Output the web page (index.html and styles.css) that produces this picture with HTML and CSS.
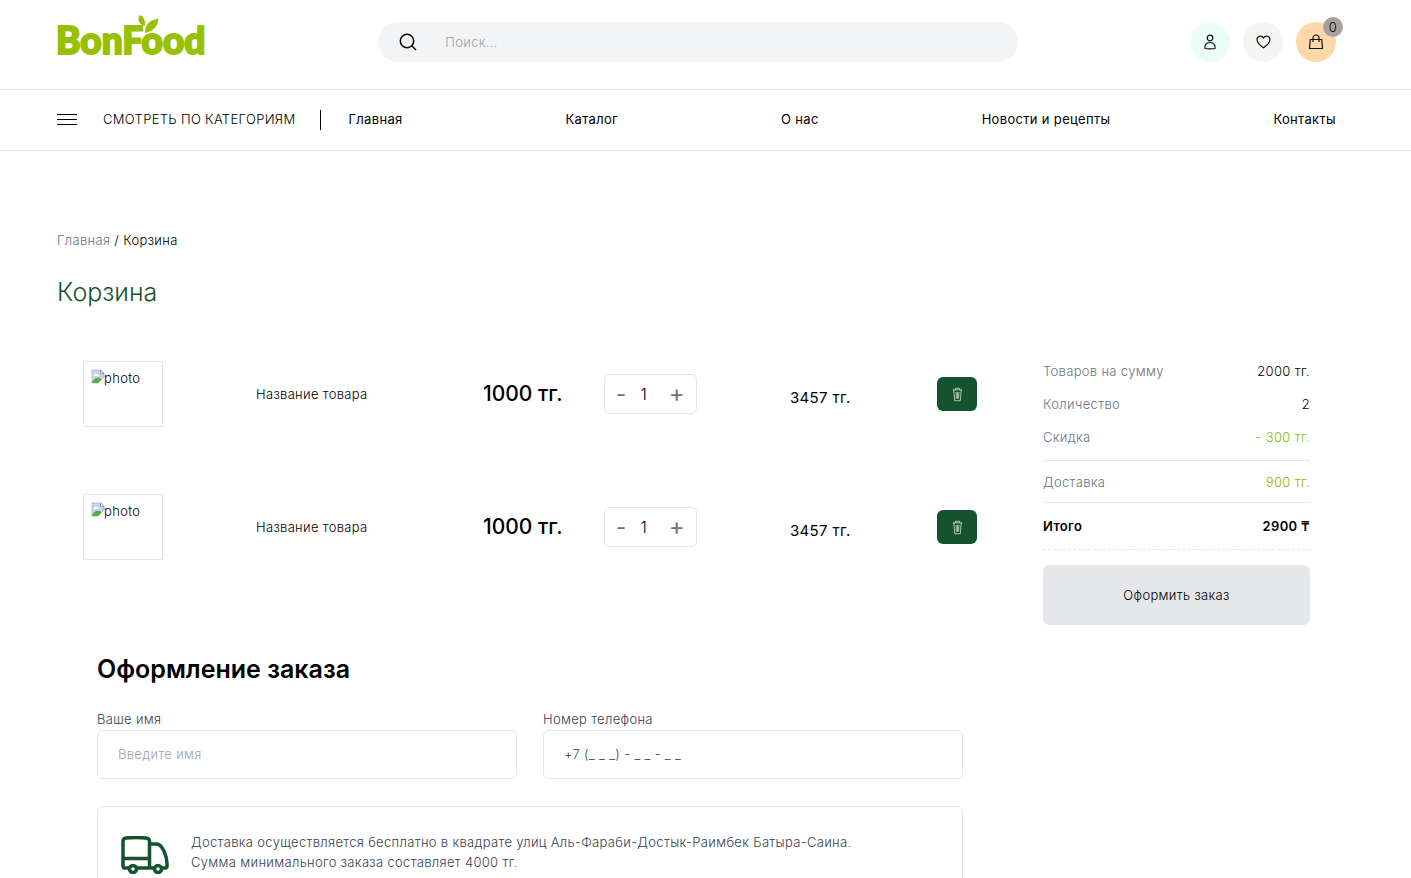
FILE: index.html
```html
<!DOCTYPE html>
<html lang="ru">
<head>
<meta charset="utf-8">
<meta name="viewport" content="width=device-width, initial-scale=1">
<title>BonFood — Корзина</title>
<link rel="stylesheet" href="styles.css">
</head>
<body>
<svg class="sprite" aria-hidden="true">
  <symbol id="trash" viewBox="0 0 14 16"><path d="M2 3h10M4.800 3V1.300h4.400V3M3 3l1 11.700h6l1-11.700M5.500 5.300l.3 7.200M7 5.300v7.200M8.500 5.300l-.3 7.200"/></symbol>
  <symbol id="broken" viewBox="0 0 16 16">
    <path d="M2 2h8.500L14 5.500V9l-6 6H2z" fill="#c3d5f5" stroke="#b5bfd0"/>
    <path d="M4 7a2 2 0 0 1 3-1 2 2 0 0 1 2 2H4z" fill="#fff"/>
    <path d="M2 15c1-4 4-6 8-5l1.500 1.500L8 15z" fill="#5aad3c"/>
    <path d="M10.500 2v3.500H14z" fill="#fff" stroke="#9a9a9a"/>
  </symbol>
</svg>
<header class="header">
  <div class="wrap topbar">
    <a class="logo" href="#" aria-label="BonFood">
      <svg width="149" height="48" viewBox="0 0 149 48">
        <text class="logo-text" x="-1" y="40">BonFood</text>
        <path d="M87.500 12c-6-2-7.500-7-4.500-11 4 2 6 6 4.500 11zM88 19c0-9 5-13 13.500-14.500C101 12 97 17 88 19z"/>
      </svg>
    </a>
    <form class="search" role="search">
      <svg width="18" height="18" viewBox="0 0 18 18"><circle cx="8" cy="8" r="6.700"/><path d="M12.800 12.800 17 17"/></svg>
      <input type="search" placeholder="Поиск..." aria-label="Поиск">
    </form>
    <div class="actions">
      <a class="round mint" href="#" aria-label="Профиль"><svg width="14" height="16" viewBox="0 0 14 16"><circle cx="7" cy="4" r="2.800"/><path d="M2 14.500c-1-2.500 1-6 5-6s6 3.500 5 6c-2 .6-8 .6-10 0z"/></svg></a>
      <a class="round grey" href="#" aria-label="Избранное"><svg width="15" height="14" viewBox="0 0 15 14"><path d="M7.500 12.800C3.500 10 1 7.500 1 4.500 1 1 5.500-.2 7.500 3 9.500-.2 14 1 14 4.500c0 3-2.500 5.500-6.500 8.300z"/></svg></a>
      <a class="round peach" href="#" aria-label="Корзина"><svg width="16" height="16" viewBox="0 0 16 16"><path d="M2.300 5.500h11.400l.8 9h-13zM5 8V4a3 3 0 0 1 6 0v4"/></svg><span class="badge">0</span></a>
    </div>
  </div>
</header>
<nav class="nav">
  <div class="wrap navbar">
    <button class="categories" type="button"><span class="burger"></span>СМОТРЕТЬ ПО КАТЕГОРИЯМ</button>
    <div class="links">
      <a href="#">Главная</a><a href="#">Каталог</a><a href="#">О нас</a><a href="#">Новости и рецепты</a><a href="#">Контакты</a>
    </div>
  </div>
</nav>
<main class="wrap">
  <div class="crumbs"><a href="#">Главная</a> / <span>Корзина</span></div>
  <h1>Корзина</h1>
  <div class="layout">
    <div class="content">
      <article class="item">
        <div class="photo"><svg width="16" height="16"><use href="#broken"/></svg>photo</div>
        <div class="name">Название товара</div>
        <div class="price">1000 тг.</div>
        <div class="qty"><button type="button" aria-label="Меньше">-</button><span>1</span><button class="plus" type="button" aria-label="Больше">+</button></div>
        <div class="total">3457 тг.</div>
        <button class="remove" type="button" aria-label="Удалить"><svg width="13" height="15"><use href="#trash"/></svg></button>
      </article>
      <article class="item">
        <div class="photo"><svg width="16" height="16"><use href="#broken"/></svg>photo</div>
        <div class="name">Название товара</div>
        <div class="price">1000 тг.</div>
        <div class="qty"><button type="button" aria-label="Меньше">-</button><span>1</span><button class="plus" type="button" aria-label="Больше">+</button></div>
        <div class="total">3457 тг.</div>
        <button class="remove" type="button" aria-label="Удалить"><svg width="13" height="15"><use href="#trash"/></svg></button>
      </article>
      <form class="order">
        <h2>Оформление заказа</h2>
        <div class="fields">
          <div class="field"><label for="name">Ваше имя</label><input id="name" type="text" placeholder="Введите имя"></div>
          <div class="field"><label for="phone">Номер телефона</label><input id="phone" type="tel" value="+7 (_ _ _) - _ _ - _ _"></div>
        </div>
        <div class="notice">
          <svg class="truck" width="48" height="38" viewBox="0 0 48 38"><path d="M8 32H4c-1.500 0-2-1-2-2.500V5c0-2 1-2.700 3-3 7-.6 13-.6 20 0 2.500.3 3.500 1 3.500 3v27M2 22.500h26.500M16 32h17M28.500 8H36c6 1 10 13 10 19.500V30c0 1.500-1 2-2 2h-3"/><circle cx="12" cy="33" r="3.500"/><circle cx="37" cy="33" r="3.500"/></svg>
          <p>Доставка осуществляется бесплатно в квадрате улиц Аль-Фараби-Достык-Раимбек Батыра-Саина.<br>Сумма минимального заказа составляет 4000 тг.</p>
        </div>
      </form>
    </div>
    <aside class="summary">
      <div class="line"><span>Товаров на сумму</span><b>2000 тг.</b></div>
      <div class="line"><span>Количество</span><b>2</b></div>
      <div class="line"><span>Скидка</span><b class="green">- 300 тг.</b></div>
      <div class="line delivery"><span>Доставка</span><b class="green">900 тг.</b></div>
      <div class="line sum"><span>Итого</span><b>2900 ₸</b></div>
      <button class="checkout" type="button">Оформить заказ</button>
    </aside>
  </div>
</main>
</body>
</html>
```
FILE: styles.css
```css
* { box-sizing: border-box; }
body { margin: 0; background: #fff; color: #000; font: 300 13px/20px Inter, sans-serif; letter-spacing: 0.025em; }
a { color: inherit; text-decoration: none; }
button, input { font: inherit; letter-spacing: inherit; color: inherit; border: 0; background: none; padding: 0; margin: 0; }
button { cursor: pointer; }
svg { fill: none; flex: none; }
.sprite { display: none; }
.wrap { padding: 0 75px 0 57px; }

.header { border-bottom: 1px solid #e5e7eb; }
.topbar { display: flex; justify-content: space-between; align-items: flex-start; height: 89px; padding-top: 14px; }
.logo svg { display: block; fill: #97c100; overflow: visible; }
.logo-text { font: 900 37px Lato, sans-serif; letter-spacing: 0; stroke: #97c100; stroke-width: 2; stroke-linejoin: round; }
.search { display: flex; align-items: center; gap: 28px; width: 50%; height: 40px; margin-top: 8px; padding: 0 21px 1px; border-radius: 20px; background: #f3f4f6; }
.search svg { stroke: #000; stroke-width: 1.500; }
.search input { flex: 1; outline: 0; }
input::placeholder { color: #9ca3af; opacity: 1; }
.actions { display: flex; gap: 13px; margin-top: 8px; }
.round { position: relative; display: flex; align-items: center; justify-content: center; width: 40px; height: 40px; border-radius: 50%; }
.round svg { stroke: #111; stroke-width: 1.200; }
.mint { background: #ecfdf5; }
.grey { background: #f5f5f4; }
.peach { background: #fed7aa; }
.badge { position: absolute; top: -5px; right: -7px; width: 20px; height: 20px; border-radius: 50%; background: #a8a29e; text-align: center; }

.nav { border-bottom: 1px solid #e5e7eb; }
.navbar { display: flex; align-items: center; height: 60px; }
.categories { display: flex; align-items: center; gap: 26px; height: 20px; padding-right: 25px; border-right: 1px solid #000; }
.burger { width: 20px; height: 11px; border: solid #000; border-width: 1px 0; background: linear-gradient(#000, #000) center / 100% 1px no-repeat; }
.categories, .links { padding-bottom: 2px; }
.links { flex: 1; display: flex; justify-content: space-between; padding-left: 27px; font-weight: 400; }

.crumbs { margin-top: 79px; }
.crumbs a { color: #6b7280; }
h1 { margin: 24px 0 36px; font-size: 25px; line-height: 36px; font-weight: 300; letter-spacing: 0; color: #14532d; }
.layout { display: flex; gap: 53px; padding-right: 26px; }
.content { flex: 1; padding: 15px 13px 0 26px; }
.item { display: grid; grid-template-columns: 173px 227px 121px 186px 1fr 40px; align-items: center; height: 66px; margin-bottom: 67px; }
.photo { display: flex; align-items: flex-start; width: 80px; height: 66px; padding: 6px 6px; border: 1px solid #e5e7eb; }
.photo svg { margin-right: -2px; }
.price { font-size: 21px; font-weight: 500; letter-spacing: 0; }
.qty { display: flex; align-items: center; gap: 14px; width: 93px; height: 40px; padding: 0 11px; border: 1px solid #e5e7eb; border-radius: 5px; font-size: 16px; }
.qty button { color: #6b7280; font-size: 22px; font-weight: 400; }
.qty .plus { margin-left: auto; font-size: 24px; }
.total { padding-top: 7px; font-size: 15px; font-weight: 400; }
.remove { display: flex; align-items: center; justify-content: center; height: 34px; border-radius: 6px; background: #14532d; }
.remove svg { stroke: #fff; stroke-width: .7; }

.order { margin: 91px 14px 0; }
h2 { margin: 0 0 22px; font-size: 25px; line-height: 36px; font-weight: 600; letter-spacing: 0; }
.fields { display: grid; grid-template-columns: 1fr 1fr; gap: 26px; }
.field { display: flex; flex-direction: column; }
.field label, .field input, .notice { color: #374151; }
.field input { height: 49px; margin-top: 1px; padding: 0 20px 2px; border: 1px solid #e5e7eb; border-radius: 6px; }
.notice { display: flex; align-items: flex-start; gap: 22px; margin-top: 27px; padding: 25px 23px; border: 1px solid #e5e7eb; border-radius: 6px; }
.notice p { margin: 0; }
.truck { margin-top: 4px; stroke: #14532d; stroke-width: 3.500; }

.summary { width: 267px; padding-top: 15px; }
.line { display: flex; justify-content: space-between; margin-bottom: 13px; }
.line span { color: #6b7280; }
.line b { font-weight: 300; }
.line .green { color: #84b800; }
.delivery { padding: 11px 0 10px; border: solid #e5e7eb; border-width: 1px 0; }
.line.sum { padding-bottom: 13px; border-bottom: 1px dashed #e5e7eb; margin-bottom: 15px; }
.sum span, .sum b { color: #000; font-weight: 600; }
.checkout { width: 100%; height: 60px; border-radius: 6px; background: #e5e7eb; }
```
